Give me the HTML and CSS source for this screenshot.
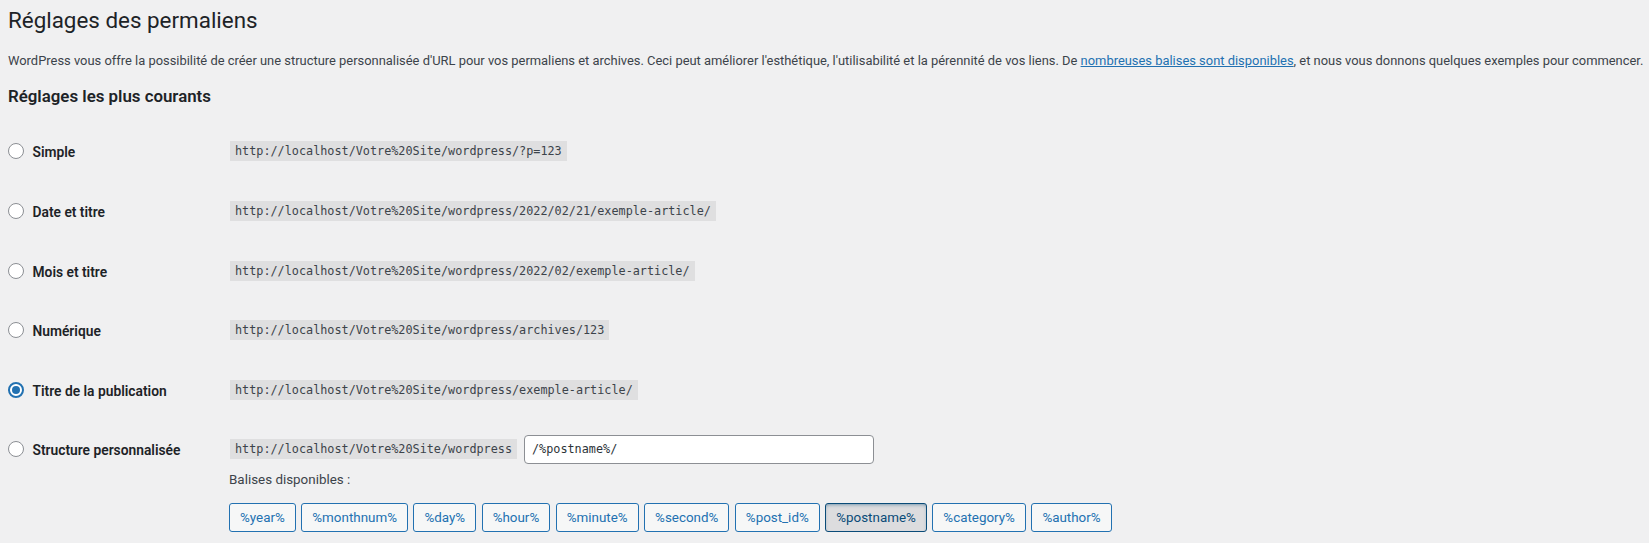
FILE: index.html
```html
<!DOCTYPE html>
<html lang="fr">
<head>
<meta charset="utf-8">
<title>Réglages des permaliens</title>
<link rel="stylesheet" href="styles.css">
</head>
<body>
<div class="wrap">
  <h1 class="page-title">Réglages des permaliens</h1>
  <p class="intro">WordPress vous offre la possibilité de créer une structure personnalisée d'URL pour vos permaliens et archives. Ceci peut améliorer l'esthétique, l'utilisabilité et la pérennité de vos liens. De <a href="#">nombreuses balises sont disponibles</a>, et nous vous donnons quelques exemples pour commencer.</p>
  <h2 class="section-title">Réglages les plus courants</h2>

  <div class="options">
    <div class="row">
      <label class="opt"><input type="radio" name="selection"><span class="opt-text">Simple</span></label>
      <div class="val"><div class="line"><code>http://localhost/Votre%20Site/wordpress/?p=123</code></div></div>
    </div>
    <div class="row">
      <label class="opt"><input type="radio" name="selection"><span class="opt-text">Date et titre</span></label>
      <div class="val"><div class="line"><code>http://localhost/Votre%20Site/wordpress/2022/02/21/exemple-article/</code></div></div>
    </div>
    <div class="row">
      <label class="opt"><input type="radio" name="selection"><span class="opt-text">Mois et titre</span></label>
      <div class="val"><div class="line"><code>http://localhost/Votre%20Site/wordpress/2022/02/exemple-article/</code></div></div>
    </div>
    <div class="row">
      <label class="opt"><input type="radio" name="selection"><span class="opt-text">Numérique</span></label>
      <div class="val"><div class="line"><code>http://localhost/Votre%20Site/wordpress/archives/123</code></div></div>
    </div>
    <div class="row">
      <label class="opt"><input type="radio" name="selection" checked><span class="opt-text">Titre de la publication</span></label>
      <div class="val"><div class="line"><code>http://localhost/Votre%20Site/wordpress/exemple-article/</code></div></div>
    </div>
    <div class="row">
      <label class="opt"><input type="radio" name="selection"><span class="opt-text">Structure personnalisée</span></label>
      <div class="val">
        <div class="line">
          <code>http://localhost/Votre%20Site/wordpress</code>
          <input type="text" class="structure" value="/%postname%/">
        </div>
        <p class="tags-label">Balises disponibles :</p>
        <ul class="tags">
          <li><button type="button" class="tag">%year%</button></li>
          <li><button type="button" class="tag">%monthnum%</button></li>
          <li><button type="button" class="tag">%day%</button></li>
          <li><button type="button" class="tag">%hour%</button></li>
          <li><button type="button" class="tag">%minute%</button></li>
          <li><button type="button" class="tag">%second%</button></li>
          <li><button type="button" class="tag">%post_id%</button></li>
          <li><button type="button" class="tag active">%postname%</button></li>
          <li><button type="button" class="tag">%category%</button></li>
          <li><button type="button" class="tag">%author%</button></li>
        </ul>
      </div>
    </div>
  </div>
</div>
</body>
</html>
```
FILE: styles.css
```css
html, body {
  margin: 0;
  padding: 0;
  background: #f0f0f1;
}
body {
  font-family: Roboto, "Liberation Sans", sans-serif;
  color: #3c434a;
  font-size: 13px;
}
.wrap {
  padding: 0 0 0 8px;
}
.page-title {
  margin: 0;
  padding: 4.7px 0 0;
  font-size: 22.4px;
  line-height: 30px;
  font-weight: 400;
  color: #1d2327;
}
.intro {
  margin: 16.6px 0 0;
  font-size: 12.92px;
  line-height: 20px;
  white-space: nowrap;
}
.intro a {
  color: #2271b1;
  text-decoration: underline;
}
.section-title {
  margin: 13.7px 0 0;
  font-size: 16.85px;
  line-height: 22px;
  font-weight: 600;
  color: #1d2327;
}
.options {
  margin-top: 14.6px;
}
.row {
  display: grid;
  grid-template-columns: 221px 1fr;
  padding: 15px 0;
}
.opt {
  display: flex;
  align-items: center;
  height: 29.6px;
  gap: 8.5px;
  color: #1d2327;
  font-weight: 600;
  font-size: 13.8px;
}
.opt-text {
  line-height: 20px;
  padding-top: 2px;
}
.opt input[type="radio"] {
  -webkit-appearance: none;
  appearance: none;
  box-sizing: border-box;
  width: 16px;
  height: 16px;
  margin: 0;
  border: 1px solid #8c8f94;
  border-radius: 50%;
  background: #fff;
  display: grid;
  place-items: center;
  flex: none;
}
.opt input[type="radio"]:checked {
  border: 2px solid #2271b1;
}
.opt input[type="radio"]:checked::before {
  content: "";
  width: 8px;
  height: 8px;
  border-radius: 50%;
  background: #2271b1;
}
.line {
  display: flex;
  align-items: center;
  height: 29.6px;
  gap: 6px;
}
code {
  display: inline-block;
  box-sizing: border-box;
  margin: 0 1px;
  padding: 3px 5px 2px;
  height: 20px;
  line-height: 15px;
  background: rgba(0, 0, 0, 0.07);
  font-family: "DejaVu Sans Mono", "Liberation Mono", monospace;
  font-size: 11.8px;
  color: #3c434a;
}
.structure {
  box-sizing: border-box;
  width: 350px;
  height: 29px;
  margin: 0;
  padding: 0 7px;
  border: 1px solid #8c8f94;
  border-radius: 4px;
  background: #fff;
  font-family: "DejaVu Sans Mono", "Liberation Mono", monospace;
  font-size: 11.8px;
  color: #2c3338;
  outline: none;
}
.tags-label {
  margin: 5.5px 0 0;
  font-size: 13.4px;
  line-height: 20px;
}
.tags {
  list-style: none;
  margin: 13.6px 0 0;
  padding: 0;
  display: flex;
  gap: 5.5px;
}
.tag {
  box-sizing: border-box;
  height: 29px;
  margin: 0;
  padding: 0 10px;
  border: 1px solid #2271b1;
  border-radius: 3px;
  background: #f6f7f7;
  color: #2271b1;
  font-family: Roboto, "Liberation Sans", sans-serif;
  font-size: 13.4px;
  line-height: 27px;
  cursor: pointer;
}
.tag.active {
  background: #dcdcde;
  border-color: #0a4b78;
  color: #0a4b78;
  box-shadow: inset 0 2px 5px -3px #0a4b78;
}
```
